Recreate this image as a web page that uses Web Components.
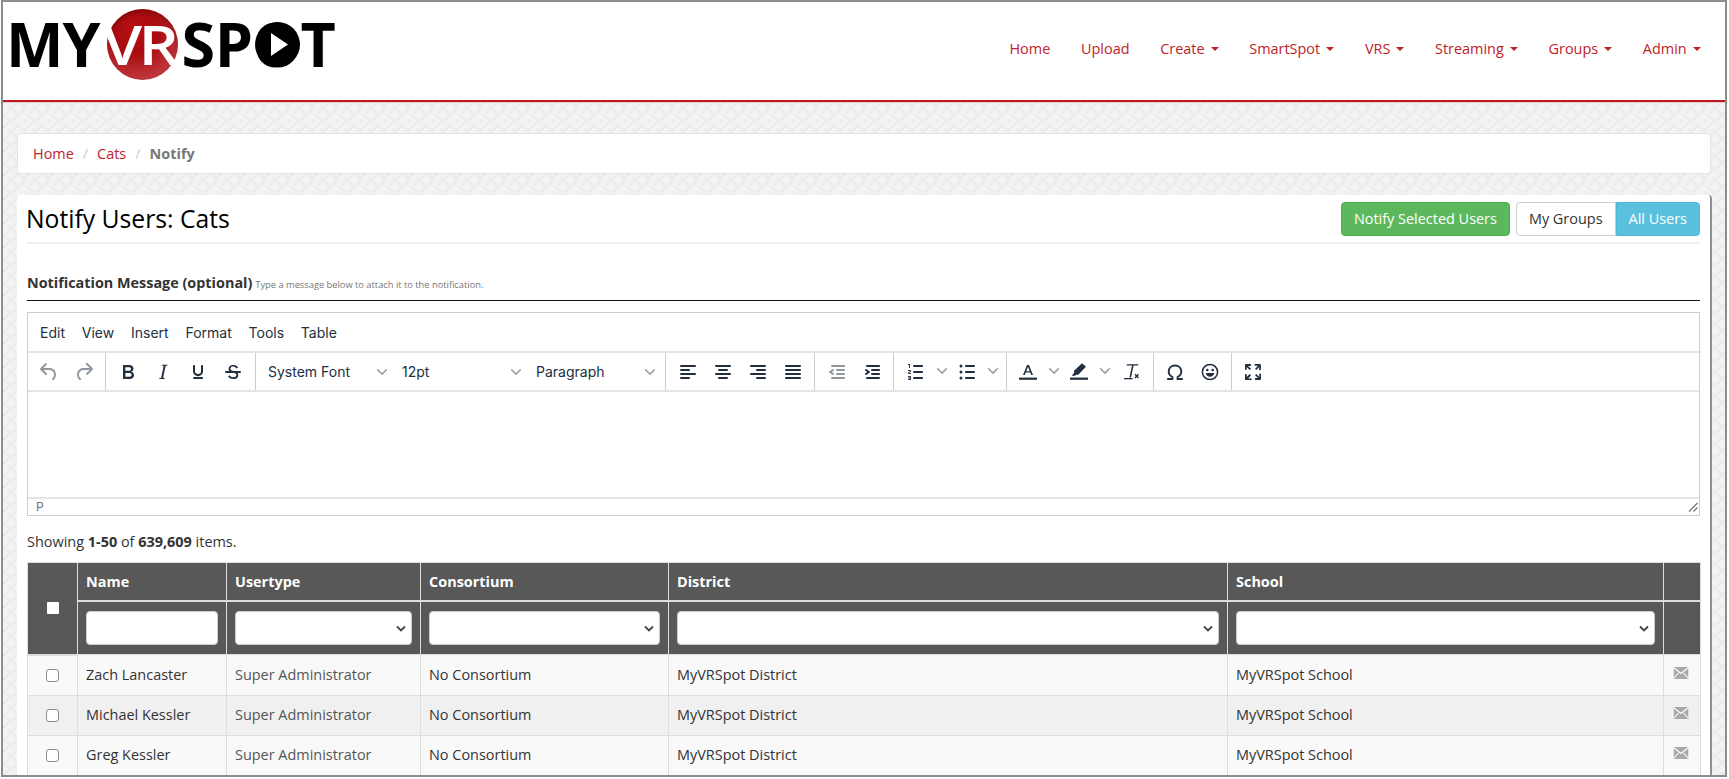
<!DOCTYPE html>
<html>
<head>
<meta charset="utf-8">
<title>Notify Users: Cats</title>
<style>
  html, body { margin: 0; padding: 0; background: white; }
  body { font-family: "Open Sans", sans-serif; }
</style>
</head>
<body>
<app-frame>
  <site-header>
    <nav-link>Home</nav-link>
    <nav-link>Upload</nav-link>
    <nav-link caret>Create</nav-link>
    <nav-link caret>SmartSpot</nav-link>
    <nav-link caret>VRS</nav-link>
    <nav-link caret>Streaming</nav-link>
    <nav-link caret>Groups</nav-link>
    <nav-link caret>Admin</nav-link>
  </site-header>
  <crumb-bar></crumb-bar>
  <notify-panel>
    <rich-editor></rich-editor>
    <user-table></user-table>
  </notify-panel>
</app-frame>

<script>
// diagonal maze texture behind the cards
const PATTERN = "url(\"data:image/svg+xml," + encodeURIComponent(
  '<svg xmlns="http://www.w3.org/2000/svg" width="24" height="24">' +
  '<rect width="24" height="24" fill="#f3f3f3"/>' +
  '<path d="M-3 9L9-3M3 15L15 3M15 3L21 9M9 3L14-2M10 22L22 10M17 29L29 17M-2 14L10 26M5 7L17 19M14 26L20 32M-3 21L3 27M21 9L27 3" fill="none" stroke="#ebebeb" stroke-width="2.200"/>' +
  '</svg>') + "\")";

function icon(d) {
  return `<svg viewBox="0 0 24 24" width="24" height="24" fill="currentColor">${d}</svg>`;
}

const ICONS = {
  undo: icon('<path d="M6.4 8H12c3.7 0 6.2 2 6.8 5.1.6 2.7-.4 5.6-2.3 6.8a1 1 0 0 1-1-1.8c1.1-.6 1.8-2.7 1.4-4.6-.5-2.1-2.1-3.5-4.9-3.5H6.4l3.3 3.3a1 1 0 1 1-1.4 1.4l-5-5a1 1 0 0 1 0-1.4l5-5a1 1 0 0 1 1.4 1.4L6.4 8z"/>'),
  redo: icon('<path d="M17.6 10H12c-2.8 0-4.4 1.4-4.9 3.5-.4 2 .3 4 1.4 4.6a1 1 0 1 1-1 1.8c-2-1.2-2.9-4.1-2.3-6.8.6-3 3-5.1 6.8-5.1h5.6l-3.3-3.3a1 1 0 1 1 1.4-1.4l5 5a1 1 0 0 1 0 1.4l-5 5a1 1 0 0 1-1.4-1.4l3.3-3.3z"/>'),
  bold: icon('<path fill-rule="evenodd" d="M7.8 19c-.3 0-.5 0-.6-.2l-.2-.5V5.7c0-.2 0-.4.2-.5l.6-.2h5c1.5 0 2.7.3 3.5 1 .7.6 1.1 1.4 1.1 2.5a3 3 0 0 1-.6 1.9c-.4.6-1 1-1.6 1.2.4.1.9.3 1.3.6s.8.7 1 1.2c.4.4.5 1 .5 1.6 0 1.3-.4 2.3-1.3 3-.8.7-2 1-3.7 1H7.8zm5-8.3c.6 0 1.2-.1 1.6-.5.4-.3.6-.7.6-1.3 0-1.1-.8-1.7-2.3-1.7H9.3v3.5h3.4zm.5 6c.7 0 1.3-.1 1.7-.4.4-.4.6-.9.6-1.5s-.2-1-.7-1.4c-.4-.3-1-.4-2-.4H9.4v3.8h4z"/>'),
  italic: icon('<path d="M16.7 4.7l-.1.9h-.3c-.6 0-1 0-1.4.3-.3.3-.4.6-.5 1.1l-2.1 9.8v.6c0 .5.4.8 1.4.8h.2l-.2.8H8l.2-.8h.2c1.1 0 1.8-.5 2-1.5l2-9.8.1-.5c0-.6-.4-.8-1.4-.8h-.3l.2-.9h5.8z"/>'),
  underline: icon('<path d="M16 5c.6 0 1 .4 1 1v5.5a4 4 0 0 1-.4 1.8l-1 1.4a5.3 5.3 0 0 1-5.5 1 5 5 0 0 1-1.6-1c-.5-.4-.8-.9-1.1-1.4a4 4 0 0 1-.4-1.8V6c0-.6.4-1 1-1s1 .4 1 1v5.5c0 .3 0 .6.2 1l.6.7a3.3 3.3 0 0 0 2.2.8 3.4 3.4 0 0 0 2.2-.8c.3-.2.4-.5.6-.8l.2-.9V6c0-.6.4-1 1-1zM8 17h8c.6 0 1 .4 1 1s-.4 1-1 1H8a1 1 0 0 1 0-2z"/>'),
  strike: icon('<path d="M15.6 8.5c-.5-.7-1-1.1-1.3-1.3-.6-.4-1.3-.6-2-.6-2.7 0-2.8 1.7-2.8 2.1 0 1.6 1.8 2 3.2 2.3 4.4.9 4.6 2.8 4.6 3.9 0 1.4-.7 4.1-5 4.1A6.2 6.2 0 0 1 7 16.4l1.5-1.1c.4.6 1.6 2 3.7 2 1.6 0 2.5-.4 3-1.2.4-.8.3-2-.8-2.6-.7-.4-1.6-.7-2.9-1-1-.2-3.9-.8-3.9-3.6C7.6 6 10.3 5 12.4 5c2.9 0 4.2 1.6 4.7 2.4l-1.5 1.1z"/><path d="M5 11h14a1 1 0 0 1 0 2H5a1 1 0 0 1 0-2z"/>'),
  alignleft: icon('<rect x="4" y="5" width="16" height="2" rx="1"/><rect x="4" y="9" width="10" height="2" rx="1"/><rect x="4" y="13" width="16" height="2" rx="1"/><rect x="4" y="17" width="10" height="2" rx="1"/>'),
  aligncenter: icon('<rect x="4" y="5" width="16" height="2" rx="1"/><rect x="7" y="9" width="10" height="2" rx="1"/><rect x="4" y="13" width="16" height="2" rx="1"/><rect x="7" y="17" width="10" height="2" rx="1"/>'),
  alignright: icon('<rect x="4" y="5" width="16" height="2" rx="1"/><rect x="10" y="9" width="10" height="2" rx="1"/><rect x="4" y="13" width="16" height="2" rx="1"/><rect x="10" y="17" width="10" height="2" rx="1"/>'),
  alignjustify: icon('<rect x="4" y="5" width="16" height="2" rx="1"/><rect x="4" y="9" width="16" height="2" rx="1"/><rect x="4" y="13" width="16" height="2" rx="1"/><rect x="4" y="17" width="16" height="2" rx="1"/>'),
  outdent: icon('<path d="M7 5h12c.6 0 1 .4 1 1s-.4 1-1 1H7a1 1 0 1 1 0-2zm5 4h7c.6 0 1 .4 1 1s-.4 1-1 1h-7a1 1 0 0 1 0-2zm0 4h7c.6 0 1 .4 1 1s-.4 1-1 1h-7a1 1 0 0 1 0-2zm-5 4h12a1 1 0 0 1 0 2H7a1 1 0 0 1 0-2zm1.6-3.8a1 1 0 0 1-1.2 1.6l-3-2a1 1 0 0 1 0-1.6l3-2a1 1 0 0 1 1.2 1.6L6.8 12l1.8 1.2z"/>'),
  indent: icon('<path d="M7 5h12c.6 0 1 .4 1 1s-.4 1-1 1H7a1 1 0 1 1 0-2zm5 4h7c.6 0 1 .4 1 1s-.4 1-1 1h-7a1 1 0 0 1 0-2zm0 4h7c.6 0 1 .4 1 1s-.4 1-1 1h-7a1 1 0 0 1 0-2zm-5 4h12a1 1 0 0 1 0 2H7a1 1 0 0 1 0-2zM5.400 10.800a1 1 0 0 1 1.200-1.600l3 2a1 1 0 0 1 0 1.600l-3 2a1 1 0 0 1-1.200-1.600L7.200 12 5.400 10.800z"/>'),
  numlist: icon('<path d="M10 17h8c.6 0 1 .4 1 1s-.4 1-1 1h-8a1 1 0 0 1 0-2zm0-6h8c.6 0 1 .4 1 1s-.4 1-1 1h-8a1 1 0 0 1 0-2zm0-6h8c.6 0 1 .4 1 1s-.4 1-1 1h-8a1 1 0 1 1 0-2zM6 4v3.5c0 .3-.2.5-.5.5a.5.5 0 0 1-.5-.5V5h-.5a.5.5 0 0 1 0-1H6zm-1 8.8l.2.2h1.3c.3 0 .5.2.5.5s-.2.5-.5.5H4.900a1 1 0 0 1-.9-1V13c0-.4.3-.8.6-1l1.2-.4.2-.3a.2.2 0 0 0-.2-.2H4.500a.5.5 0 0 1-.5-.5c0-.3.2-.5.5-.5h1.600c.5 0 .9.4.9 1v.1c0 .4-.3.8-.6 1l-1.200.4-.2.3zM7 17v2c0 .6-.4 1-1 1H4.500a.5.5 0 0 1 0-1h1.200c.2 0 .3-.1.3-.3 0-.2-.1-.3-.3-.3H4.400a.4.4 0 1 1 0-.8h1.300c.2 0 .3-.1.3-.3 0-.2-.1-.3-.3-.3H4.500a.5.5 0 1 1 0-1H6c.6 0 1 .4 1 1v.5z"/>'),
  bullist: icon('<rect x="10" y="5" width="10" height="2" rx="1"/><rect x="10" y="11" width="10" height="2" rx="1"/><rect x="10" y="17" width="10" height="2" rx="1"/><circle cx="6" cy="6" r="1.500"/><circle cx="6" cy="12" r="1.500"/><circle cx="6" cy="18" r="1.500"/>'),
  forecolor: icon('<path fill-rule="evenodd" d="M8.800 15H7l4-10h2l4 10h-1.800l-.9-2.400H9.700zM10.300 11.200h3.400L12 6.800z"/><rect x="3" y="17.600" width="18" height="2.200"/>'),
  hilitecolor: icon('<path d="M15 3.200l4 3.600-8 8.300-1.600-.5-1.200 1.200H4.700l2.600-3.200-.5-1.600z"/><rect x="3" y="17.600" width="18" height="2.200"/>'),
  removeformat: icon('<path d="M7.700 4.200h11.600v1.400h-4.700l-2.600 11.800h-1.600L13 5.600H7.700z"/><rect x="5" y="18" width="8.600" height="1.300"/><path d="M16 14.300l3.400 3.600M19.400 14.300L16 17.900" stroke="currentColor" stroke-width="1.400" fill="none"/>'),
  charmap: icon('<path d="M4.200 19h5.200v-2c-2.300-1.100-3.700-3-3.700-5.400 0-3.600 2.700-6.100 6.300-6.100s6.300 2.500 6.300 6.100c0 2.400-1.400 4.300-3.700 5.400v2h5.200" fill="none" stroke="currentColor" stroke-width="1.900"/>'),
  emoji: icon('<circle cx="12" cy="12" r="7.600" fill="none" stroke="currentColor" stroke-width="1.500"/><circle cx="9.300" cy="10" r="1.300"/><circle cx="14.700" cy="10" r="1.300"/><path d="M7.800 13h8.400c-.3 2.300-2 3.800-4.200 3.800s-3.900-1.500-4.200-3.800z"/>'),
  fullscreen: icon('<path d="M15.300 10l-1.200-1.300 2.900-3h-2.300a.9.9 0 1 1 0-1.700H19c.5 0 .9.4.9.9v4.400a.9.9 0 1 1-1.800 0V7l-2.800 3zm0 4l3 3v-2.300a.9.9 0 1 1 1.700 0V19c0 .5-.4.9-.9.9h-4.400a.9.9 0 1 1 0-1.800H17l-3-2.900 1.300-1.200zM10 15.400l-2.900 3h2.300a.9.9 0 1 1 0 1.700H5a.9.9 0 0 1-1-.9v-4.400a.9.9 0 1 1 1.800 0V17l2.900-3 1.300 1.400zM8.700 10L5.700 7v2.300a.9.9 0 0 1-1.700 0V5c0-.5.4-.9.9-.9h4.400a.9.9 0 0 1 0 1.800H7l3 2.900-1.300 1.200z"/>')
};

const CHEVRON = '<svg viewBox="0 0 10 10" width="10" height="10" fill="currentColor"><path d="M8.700 2.200c.3-.3.8-.3 1 0 .4.4.4.9 0 1.200L5.700 7.800c-.3.3-.9.3-1.200 0L.2 3.400a.8.8 0 0 1 0-1.200c.3-.3.8-.3 1.100 0L5 6l3.700-3.800z"/></svg>';

// outer screenshot frame
class AppFrame extends HTMLElement {
  constructor() {
    super();
    this.attachShadow({mode: 'open'}).innerHTML = `
      <style>
        :host {
          display: block;
          box-sizing: border-box;
          width: 1726px;
          height: 777px;
          margin-left: 1px;
          border: 2px solid #8d8d8d;
          overflow: hidden;
          background: #f3f3f3 ${PATTERN};
        }
      </style>
      <slot></slot>`;
  }
}
customElements.define('app-frame', AppFrame);

class SiteHeader extends HTMLElement {
  constructor() {
    super();
    this.attachShadow({mode: 'open'}).innerHTML = `
      <style>
        :host {
          display: flex;
          justify-content: space-between;
          box-sizing: border-box;
          height: 100px;
          padding: 6px 9px 0 3px;
          background: white;
          border-bottom: 2px solid #bd1a20;
          box-shadow: 0 1px 0 rgb(189 26 32 / 0.15);
        }
        .logo {
          display: flex;
          align-items: center;
          height: 72px;
          font: 700 61px/72px "Open Sans", sans-serif;
          color: black;
        }
        .my { letter-spacing: -1px; }
        .ball {
          display: flex;
          justify-content: center;
          flex: none;
          width: 71px;
          height: 71px;
          margin: 0 4px 0 7px;
          border-radius: 50%;
          background: radial-gradient(circle at 40% 30%, #b70f13 0%, #a80c11 35%, #c13a3e 78%, #c9686a 100%);
          box-shadow: inset 0 3px 4px rgb(90 0 0 / 0.45);
          color: white;
          font: 600 54px/70px "Open Sans", sans-serif;
          letter-spacing: -3px;
        }
        .ball span { display: block; transform: translateX(-3px) scaleX(1.170); }
        .spot { display: flex; letter-spacing: -0.5px; }
        .o { position: relative; display: block; }
        .o svg { position: absolute; left: 2px; top: 14px; }
        nav { display: flex; height: 82px; align-items: center; }
      </style>
      <div class="logo">
        <span class="my">MY</span>
        <span class="ball"><span>VR</span></span>
        <span class="spot">SP<span class="o">O<svg width="45" height="45" viewBox="0 0 45 45"><circle cx="22.500" cy="22.500" r="22.500" fill="black"/><path d="M16 11l17 11.500L16 34z" fill="white"/></svg></span>T</span>
      </div>
      <nav><slot></slot></nav>`;
  }
}
customElements.define('site-header', SiteHeader);

class NavLink extends HTMLElement {
  constructor() {
    super();
    this.attachShadow({mode: 'open'}).innerHTML = `
      <style>
        :host {
          display: flex;
          align-items: center;
          padding: 0 15.350px;
          font: 14.450px/20px "Open Sans", sans-serif;
          color: #bd2229;
        }
        .caret {
          display: none;
          margin-left: 6px;
          border-top: 4px solid #bd2229;
          border-left: 4px solid transparent;
          border-right: 4px solid transparent;
        }
        :host([caret]) .caret { display: block; }
      </style>
      <slot></slot><i class="caret"></i>`;
  }
}
customElements.define('nav-link', NavLink);

class CrumbBar extends HTMLElement {
  constructor() {
    super();
    this.attachShadow({mode: 'open'}).innerHTML = `
      <style>
        :host {
          display: flex;
          align-items: center;
          box-sizing: border-box;
          height: 41px;
          margin: 31px 14px 21px 14px;
          padding: 1px 15px 0 15px;
          background: white;
          border: 1px solid #e4e4e4;
          border-radius: 4px;
          font: 14.450px/20px "Open Sans", sans-serif;
        }
        a { color: #bd2229; }
        i { font-style: normal; color: #ccc; padding: 0 9px; }
        b { color: #777; }
      </style>
      <a>Home</a><i>/</i><a>Cats</a><i>/</i><b>Notify</b>`;
  }
}
customElements.define('crumb-bar', CrumbBar);

class NotifyPanel extends HTMLElement {
  constructor() {
    super();
    this.attachShadow({mode: 'open'}).innerHTML = `
      <style>
        :host {
          display: block;
          box-sizing: border-box;
          width: 1695px;
          margin: 0 14px;
          padding: 7px 10px 10px 10px;
          background: white;
          border-right: 2px solid #8f8f8f;
          border-radius: 4px 4px 0 0;
          color: #333;
          font: 14.450px/20px "Open Sans", sans-serif;
        }
        .top {
          display: flex;
          justify-content: space-between;
          height: 40px;
          border-bottom: 2px solid #eee;
        }
        h1 { margin: 0 0 0 -1px; font: 400 24.700px/34px "Open Sans", sans-serif; color: #000; }
        .actions { display: flex; height: 34px; }
        .btn {
          display: flex;
          align-items: center;
          box-sizing: border-box;
          height: 34px;
          padding: 0 12px;
          border: 1px solid transparent;
        }
        .notify {
          margin-right: 6px;
          background: #5cb85c;
          border-color: #4cae4c;
          border-radius: 4px;
          color: white;
        }
        .groups {
          background: white;
          border-color: #ccc;
          border-radius: 4px 0 0 4px;
          color: #333;
        }
        .all {
          background: #5bc0de;
          border-color: #46b8da;
          border-radius: 0 4px 4px 0;
          color: white;
        }
        .label {
          display: flex;
          align-items: baseline;
          gap: 3px;
          height: 27px;
          margin-top: 29px;
          border-bottom: 1px solid #111;
        }
        .label b { font-size: 14.400px; }
        .label small { font-size: 9.300px; color: #777; }
      </style>
      <div class="top">
        <h1>Notify Users: Cats</h1>
        <div class="actions">
          <span class="btn notify">Notify Selected Users</span>
          <span class="btn groups">My Groups</span>
          <span class="btn all">All Users</span>
        </div>
      </div>
      <div class="label"><b>Notification Message (optional)</b> <small>Type a message below to attach it to the notification.</small></div>
      <slot></slot>`;
  }
}
customElements.define('notify-panel', NotifyPanel);

class ToolBtn extends HTMLElement {
  constructor() {
    super();
    let name = this.getAttribute('icon');
    this.attachShadow({mode: 'open'}).innerHTML = `
      <style>
        :host {
          display: flex;
          flex: none;
          align-items: center;
          justify-content: center;
          width: 35px;
          height: 37px;
          color: #222f3e;
        }
        :host([off]) { color: rgb(34 47 62 / 0.5); }
        :host([split]) { width: 34px; }
      </style>
      ${ICONS[name]}`;
  }
}
customElements.define('tool-btn', ToolBtn);

class ToolDrop extends HTMLElement {
  constructor() {
    super();
    this.attachShadow({mode: 'open'}).innerHTML = `
      <style>
        :host {
          display: flex;
          flex: none;
          align-items: center;
          height: 37px;
          color: #222f3e;
          font: 14px/20px Inter, sans-serif;
        }
        :host([label]) {
          justify-content: space-between;
          box-sizing: border-box;
          width: 134px;
          padding: 1px 8px 0 7px;
        }
        :host(:not([label])) { justify-content: center; width: 17px; }
        span { display: flex; color: #9ba1a8; margin-top: -1px; }
      </style>
      ${this.getAttribute('label') || ''}<span>${CHEVRON}</span>`;
  }
}
customElements.define('tool-drop', ToolDrop);

class RichEditor extends HTMLElement {
  constructor() {
    super();
    this.attachShadow({mode: 'open'}).innerHTML = `
      <style>
        :host {
          display: block;
          box-sizing: border-box;
          height: 204px;
          margin-top: 11px;
          border: 1px solid #ccc;
          color: #222f3e;
          font: 14px/20px Inter, sans-serif;
        }
        .menu {
          display: flex;
          align-items: center;
          box-sizing: border-box;
          height: 40px;
          padding: 1px 0 0 12px;
          gap: 16.800px;
          border-bottom: 2px solid #e4e4e4;
        }
        .tools {
          display: flex;
          height: 39px;
          box-sizing: border-box;
          border-bottom: 2px solid #e4e4e4;
        }
        .group {
          display: flex;
          box-sizing: border-box;
          height: 37px;
          padding: 0 4px;
          border-right: 1px solid #ccc;
        }
        .group:last-child { border-right: 0; }
        .edit { height: 105px; }
        .status {
          display: flex;
          justify-content: space-between;
          align-items: center;
          box-sizing: border-box;
          height: 18px;
          padding: 0 1px 0 8px;
          border-top: 2px solid #e4e4e4;
          color: #6b7480;
          font-size: 12px;
        }
      </style>
      <div class="menu"><span>Edit</span><span>View</span><span>Insert</span><span>Format</span><span>Tools</span><span>Table</span></div>
      <div class="tools">
        <div class="group" style="padding:0 4px 0 3px"><tool-btn icon="undo" off></tool-btn><tool-btn icon="redo" off></tool-btn></div>
        <div class="group" style="padding:0 5px 0 4px"><tool-btn icon="bold"></tool-btn><tool-btn icon="italic"></tool-btn><tool-btn icon="underline"></tool-btn><tool-btn icon="strike"></tool-btn></div>
        <div class="group" style="padding:0 2px 0 5px"><tool-drop label="System Font"></tool-drop><tool-drop label="12pt"></tool-drop><tool-drop label="Paragraph"></tool-drop></div>
        <div class="group" style="padding:0 4px 0 4px"><tool-btn icon="alignleft"></tool-btn><tool-btn icon="aligncenter"></tool-btn><tool-btn icon="alignright"></tool-btn><tool-btn icon="alignjustify"></tool-btn></div>
        <div class="group"><tool-btn icon="outdent" off></tool-btn><tool-btn icon="indent"></tool-btn></div>
        <div class="group" style="padding:0 5px"><tool-btn icon="numlist" split></tool-btn><tool-drop></tool-drop><tool-btn icon="bullist" split></tool-btn><tool-drop></tool-drop></div>
        <div class="group" style="padding:0 5px 0 4px"><tool-btn icon="forecolor" split></tool-btn><tool-drop></tool-drop><tool-btn icon="hilitecolor" split></tool-btn><tool-drop></tool-drop><tool-btn icon="removeformat"></tool-btn></div>
        <div class="group" style="padding:0 4px 0 3px"><tool-btn icon="charmap"></tool-btn><tool-btn icon="emoji"></tool-btn></div>
        <div class="group" style="padding:0 3px"><tool-btn icon="fullscreen"></tool-btn></div>
      </div>
      <div class="edit"></div>
      <div class="status"><span>P</span>
        <svg width="10" height="10" viewBox="0 0 10 10"><path d="M1 9.500L9.500 1M5.500 9.500L9.500 5.500" stroke="#5f6b78" stroke-width="1.100" fill="none"/></svg>
      </div>`;
  }
}
customElements.define('rich-editor', RichEditor);

const USERS = [
  ["Zach Lancaster", "Super Administrator", "No Consortium", "MyVRSpot District", "MyVRSpot School"],
  ["Michael Kessler", "Super Administrator", "No Consortium", "MyVRSpot District", "MyVRSpot School"],
  ["Greg Kessler", "Super Administrator", "No Consortium", "MyVRSpot District", "MyVRSpot School"]
];

const ENVELOPE = '<svg width="15" height="12" viewBox="0 0 15 12"><path d="M0 0h15v12H0z" fill="#a9a9a9"/><path d="M0 .5l7.500 6L15 .5M0 11.500l5-5.500M15 11.500l-5-5.500" stroke="white" stroke-width="1.100" fill="none"/></svg>';

class UserTable extends HTMLElement {
  constructor() {
    super();
    let rows = USERS.map(u => `
      <tr>
        <td class="pick"><i class="box"></i></td>
        <td>${u[0]}</td>
        <td class="soft">${u[1]}</td>
        <td>${u[2]}</td>
        <td>${u[3]}</td>
        <td>${u[4]}</td>
        <td class="mail">${ENVELOPE}</td>
      </tr>`).join('');
    let select = '<select aria-label="filter"></select>';
    this.attachShadow({mode: 'open'}).innerHTML = `
      <style>
        :host { display: block; }
        p { margin: 0 0 10px 0; height: 20px; padding-top: 16px; color: #333; }
        b { font-weight: 700; }
        table {
          width: 1673px;
          table-layout: fixed;
          border-collapse: collapse;
          font: 14.450px/20px "Open Sans", sans-serif;
        }
        th {
          background: #585858;
          color: white;
          border: 1px solid #ddd;
          padding: 0 8px;
          text-align: left;
          font-weight: 700;
        }
        .names th { height: 37px; border-bottom-width: 2px; }
        .filters th { height: 52px; padding: 0 8px; }
        td {
          height: 39px;
          padding: 0 8px;
          border: 1px solid #ddd;
          color: #333;
          background: #f9f9f9;
        }
        tr:nth-child(even) td { background: #f0f0f0; }
        td.soft { color: #555; }
        .pick, .mail { padding: 0; text-align: center; }
        .mail svg { display: block; margin: -4px auto 0 auto; transform: translateX(-1.500px); }
        .box {
          display: block;
          box-sizing: border-box;
          width: 13px;
          height: 13px;
          margin: 0 auto;
          background: white;
          border: 1px solid #8a8a8a;
          border-radius: 3px;
        }
        .top-box { width: 12px; height: 12px; border: 0; border-radius: 1px; }
        input, select {
          display: block;
          box-sizing: border-box;
          width: 100%;
          height: 34px;
          margin: 0;
          border: 1px solid #ccc;
          border-radius: 4px;
          background-color: white;
          appearance: none;
        }
        select {
          background-image: url("data:image/svg+xml,%3Csvg xmlns='http://www.w3.org/2000/svg' width='10' height='7'%3E%3Cpath d='M1 1.500l4 4 4-4' fill='none' stroke='%23444' stroke-width='1.800'/%3E%3C/svg%3E");
          background-repeat: no-repeat;
          background-position: right 5px center;
        }
      </style>
      <p>Showing <b>1-50</b> of <b>639,609</b> items.</p>
      <table>
        <colgroup><col width="50"><col width="149"><col width="194"><col width="248"><col width="559"><col width="436"><col width="37"></colgroup>
        <thead>
          <tr class="names">
            <th rowspan="2" class="pick"><i class="box top-box"></i></th>
            <th>Name</th><th>Usertype</th><th>Consortium</th><th>District</th><th>School</th><th></th>
          </tr>
          <tr class="filters">
            <th><input aria-label="filter"></th>
            <th>${select}</th><th>${select}</th><th>${select}</th><th>${select}</th><th></th>
          </tr>
        </thead>
        <tbody>${rows}</tbody>
      </table>`;
  }
}
customElements.define('user-table', UserTable);
</script>
</body>
</html>
